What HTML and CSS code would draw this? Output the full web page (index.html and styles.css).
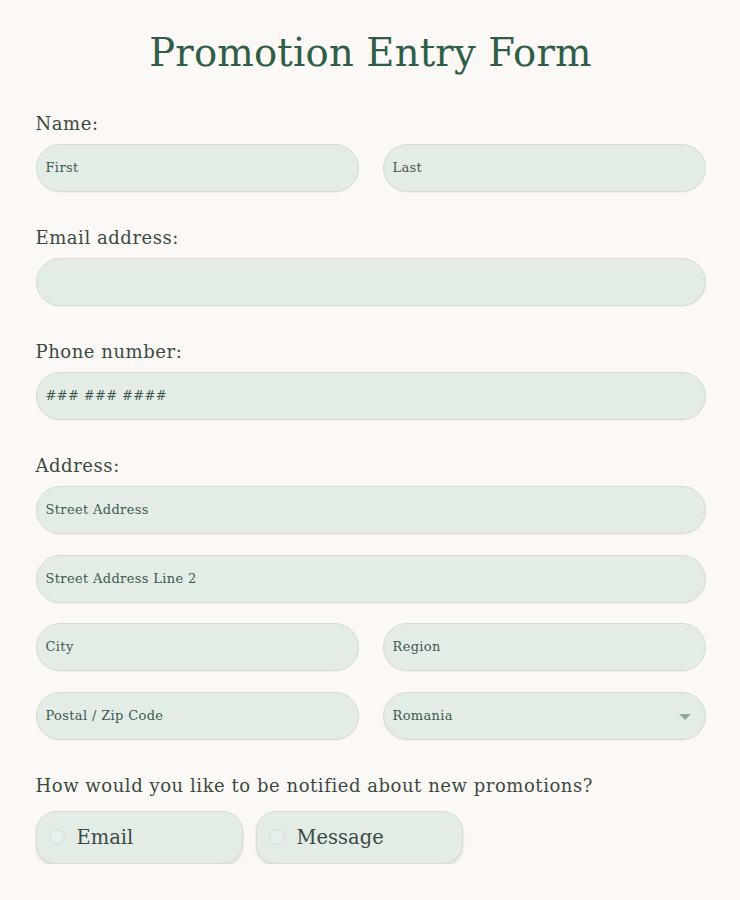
FILE: index.html
```html
<!DOCTYPE html>
<html lang="en">
<head>
<meta charset="utf-8">
<title>Promotion Entry Form</title>
<link rel="stylesheet" href="styles.css">
</head>
<body>
<main class="form">
  <h1 class="title">Promotion Entry Form</h1>

  <section class="group">
    <div class="label">Name:</div>
    <div class="row two">
      <div class="field">First</div>
      <div class="field">Last</div>
    </div>
  </section>

  <section class="group">
    <div class="label">Email address:</div>
    <div class="field"></div>
  </section>

  <section class="group">
    <div class="label">Phone number:</div>
    <div class="field">### ### ####</div>
  </section>

  <section class="group">
    <div class="label">Address:</div>
    <div class="stack">
      <div class="field">Street Address</div>
      <div class="field">Street Address Line 2</div>
      <div class="row two">
        <div class="field">City</div>
        <div class="field">Region</div>
      </div>
      <div class="row two">
        <div class="field">Postal / Zip Code</div>
        <div class="field select">Romania<span class="caret"></span></div>
      </div>
    </div>
  </section>

  <section class="group">
    <div class="label q">How would you like to be notified about new promotions?</div>
    <div class="radios">
      <div class="radio"><span class="dot"></span>Email</div>
      <div class="radio"><span class="dot"></span>Message</div>
    </div>
  </section>
</main>
</body>
</html>
```
FILE: styles.css
```css
html, body {
  margin: 0;
  padding: 0;
  background: #fcf8f5;
}
body {
  font-family: "DejaVu Serif", "Liberation Serif", serif;
  color: #3b4a42;
}
.form {
  width: 670px;
  margin: 0 auto;
  padding: 0 0 0 1px;
  display: flex;
  flex-direction: column;
}
.title {
  margin: 0;
  padding-top: 28px;
  height: 50px;
  line-height: 50px;
  text-align: center;
  font-weight: normal;
  font-size: 38.5px;
  color: #2f5e47;
  letter-spacing: 0.2px;
}
.group {
  display: flex;
  flex-direction: column;
  margin-top: 35px;
}
.label {
  font-size: 18px;
  line-height: 22px;
  margin-bottom: 9px;
  color: #3b4a42;
  letter-spacing: 0.55px;
}
.label.q {
  margin-bottom: 14px;
}
.row.two {
  display: grid;
  grid-template-columns: 1fr 1fr;
  column-gap: 24px;
}
.stack {
  display: flex;
  flex-direction: column;
  gap: 20.5px;
}
.field {
  height: 46px;
  box-sizing: content-box;
  border: 1px solid #cfdfd4;
  border-radius: 24px;
  background: #e3ede6;
  font-size: 13px;
  letter-spacing: 0.35px;
  line-height: 46px;
  padding: 0 9px;
  color: #3e5a4e;
  box-shadow: 0 1px 1px rgba(0,0,0,0.04);
  position: relative;
}
.select .caret {
  position: absolute;
  right: 14px;
  top: 21px;
  width: 0;
  height: 0;
  border-left: 6px solid transparent;
  border-right: 6px solid transparent;
  border-top: 6px solid #93a69b;
}
.radios {
  display: flex;
  gap: 13px;
}
.radio {
  width: 207px;
  height: 53px;
  border: 1px solid #d2dfd6;
  border-radius: 20px;
  background: #e3ede6;
  box-shadow: 0 2px 3px rgba(0,0,0,0.12);
  display: flex;
  align-items: center;
  font-size: 19.5px;
  color: #3b4a42;
  padding-left: 12px;
  box-sizing: border-box;
}
.dot {
  width: 14px;
  height: 14px;
  border-radius: 50%;
  border: 1px solid #d3dcd6;
  background: #e7efea;
  margin-right: 12px;
  flex: none;
}
```
